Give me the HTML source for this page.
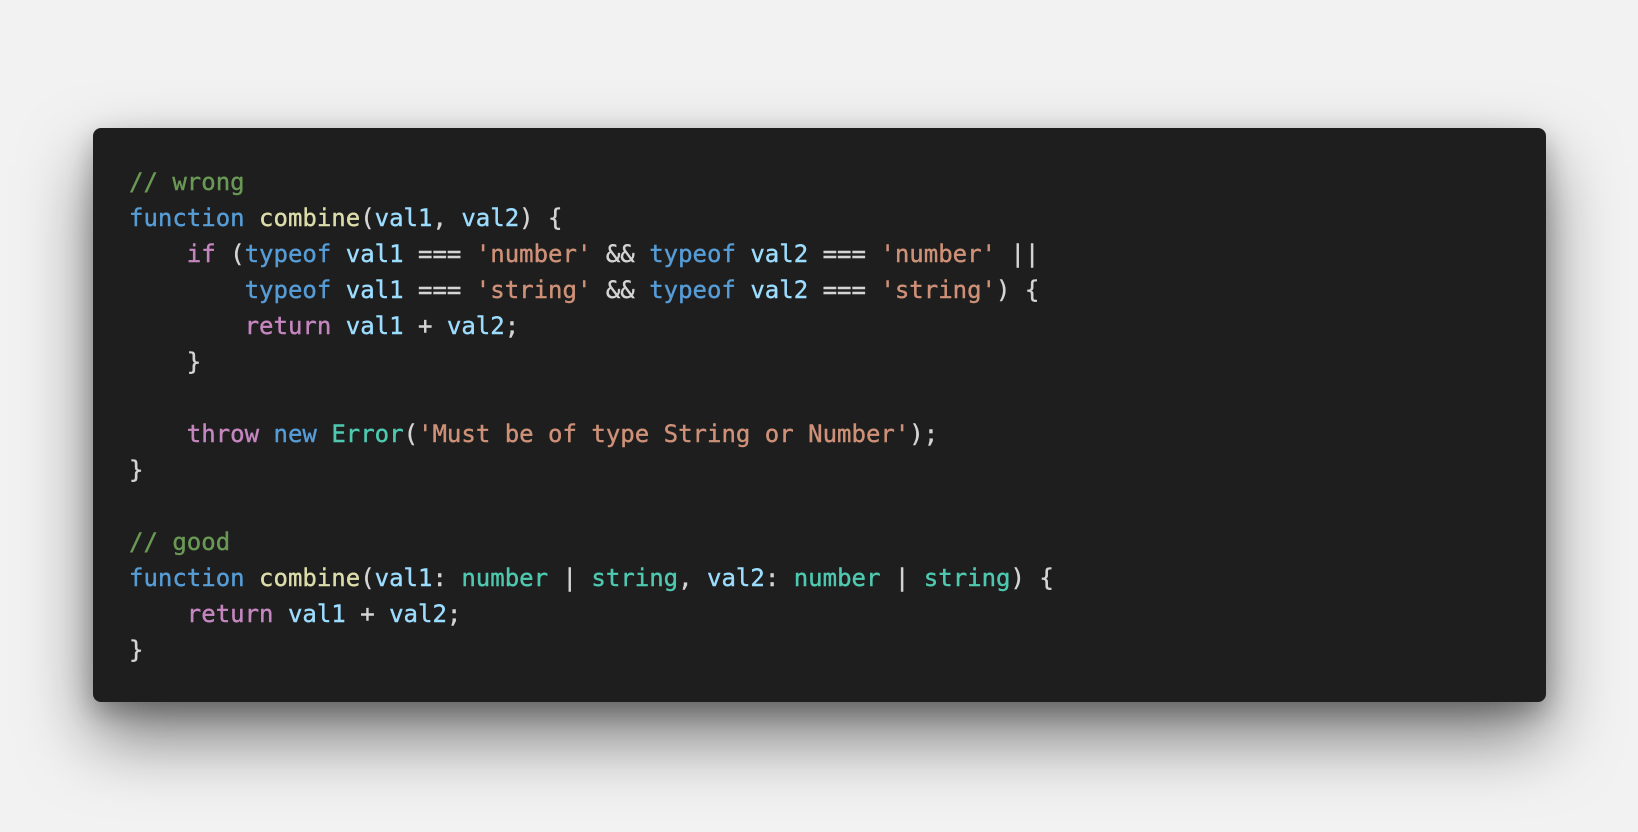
<!DOCTYPE html>
<html><head><style>
html,body{margin:0;padding:0;background:#f2f2f2;width:1638px;height:832px;overflow:hidden}
.card{position:absolute;left:93px;top:128px;width:1453px;height:574px;background:#1e1e1e;border-radius:8px;box-shadow:0 35px 70px rgba(0,0,0,.5),0 10px 25px rgba(0,0,0,.25)}
pre{margin:0;position:absolute;left:36px;top:36px;font-family:"DejaVu Sans Mono","Liberation Mono",monospace;font-size:24px;line-height:36px;color:#d4d4d4;-webkit-text-stroke:0.4px currentColor}
.c{color:#6a9955}.k{color:#569cd6}.f{color:#dcdcaa}.v{color:#9cdcfe}.s{color:#ce9178}.p{color:#c586c0}.t{color:#4ec9b0}
</style></head><body><div class="card"><pre><span class="c">// wrong</span>
<span class="k">function</span> <span class="f">combine</span>(<span class="v">val1</span>, <span class="v">val2</span>) {
    <span class="p">if</span> (<span class="k">typeof</span> <span class="v">val1</span> === <span class="s">'number'</span> &amp;&amp; <span class="k">typeof</span> <span class="v">val2</span> === <span class="s">'number'</span> ||
        <span class="k">typeof</span> <span class="v">val1</span> === <span class="s">'string'</span> &amp;&amp; <span class="k">typeof</span> <span class="v">val2</span> === <span class="s">'string'</span>) {
        <span class="p">return</span> <span class="v">val1</span> + <span class="v">val2</span>;
    }

    <span class="p">throw</span> <span class="k">new</span> <span class="t">Error</span>(<span class="s">'Must be of type String or Number'</span>);
}

<span class="c">// good</span>
<span class="k">function</span> <span class="f">combine</span>(<span class="v">val1</span>: <span class="t">number</span> | <span class="t">string</span>, <span class="v">val2</span>: <span class="t">number</span> | <span class="t">string</span>) {
    <span class="p">return</span> <span class="v">val1</span> + <span class="v">val2</span>;
}</pre></div></body></html>
